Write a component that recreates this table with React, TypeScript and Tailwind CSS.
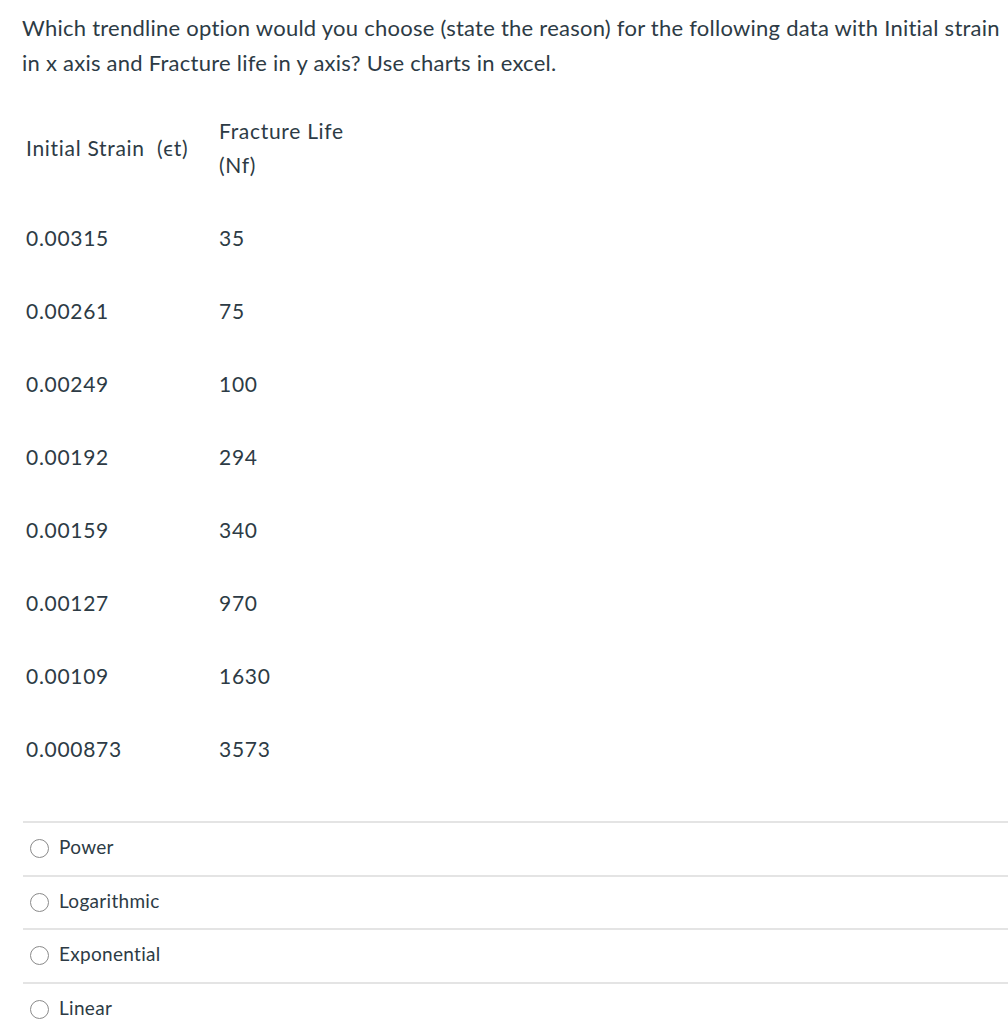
const rows = [
  ['0.00315', '35'],
  ['0.00261', '75'],
  ['0.00249', '100'],
  ['0.00192', '294'],
  ['0.00159', '340'],
  ['0.00127', '970'],
  ['0.00109', '1630'],
  ['0.000873', '3573'],
];

const options = ['Power', 'Logarithmic', 'Exponential', 'Linear'];

export default function App() {
  return (
    <div className="min-h-[1024px] bg-white text-[#2d3b45] font-['Lato',_'Liberation_Sans',_sans-serif]">
      <p className="pl-[22px] pt-[10px] text-[22px] leading-[35px] tracking-[0.25px]">
        Which trendline option would you choose (state the reason) for the following data with Initial strain in x axis and Fracture life in y axis? Use charts in excel.
      </p>

      <table className="ml-[26px] mt-[14px] border-collapse text-[21px] tracking-[0.7px]">
        <thead>
          <tr className="h-[107px]">
            <th className="w-[193px] p-0 text-left font-normal align-middle">Initial Strain&nbsp; (ϵt)</th>
            <th className="p-0 text-left font-normal align-middle leading-[34px]">
              Fracture Life
              <br />
              (Nf)
            </th>
          </tr>
        </thead>
        <tbody>
          {rows.map(([strain, life]) => (
            <tr key={strain} className="h-[73px]">
              <td className="p-0 align-middle">{strain}</td>
              <td className="p-0 align-middle">{life}</td>
            </tr>
          ))}
        </tbody>
      </table>

      <div className="ml-[23px] mt-[36px]">
        {options.map((opt) => (
          <div key={opt} className="flex h-[53.5px] items-center border-t-2 border-[#e4e4e4]">
            <span className="ml-[7px] h-[19px] w-[19px] rounded-full border border-[#8a8a8a]" />
            <span className="ml-[10px] pb-[3px] text-[19px] tracking-[0.3px]">{opt}</span>
          </div>
        ))}
      </div>
    </div>
  );
}
